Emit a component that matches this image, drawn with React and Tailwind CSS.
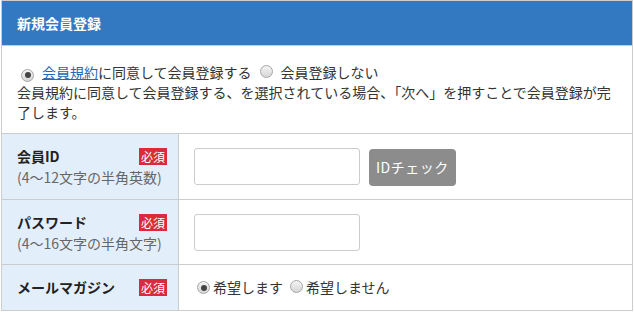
import React from "react";

const font = { fontFamily: '"Noto Sans CJK JP", "Noto Sans", sans-serif' };

function Radio({ checked }) {
  return (
    <span className="inline-flex items-center justify-center w-[13px] h-[13px] rounded-full border border-[#a6a6a6] bg-gradient-to-b from-[#f4f4f4] to-[#d6d6d6] shrink-0">
      {checked && <span className="w-[6px] h-[6px] rounded-full bg-[#444]" />}
    </span>
  );
}

function Badge() {
  return (
    <span className="bg-[#dc2a3c] text-white text-[12px] leading-[17px] px-[2px] h-[17px]">必須</span>
  );
}

function Row({ label, note, children, height }) {
  return (
    <div className={`flex border-t border-[#cccccc] ${height}`}>
      <div className="w-[177px] shrink-0 bg-[#e3eefb] border-r border-[#cccccc] pl-[15px] pr-[11px] flex flex-col justify-center">
        <div className="flex items-center justify-between">
          <span className="font-bold text-[14px] text-[#222]">{label}</span>
          <Badge />
        </div>
        {note && <div className="text-[14px] text-[#666] leading-[20px]">{note}</div>}
      </div>
      <div className="flex-1 pl-[15px] flex items-center gap-[9px]">{children}</div>
    </div>
  );
}

export default function App() {
  return (
    <div className="bg-white w-[634px] h-[312px]" style={font}>
      <div className="ml-px w-[632px] border border-[#cccccc]">
        {/* header */}
        <div className="bg-[#3379c2] h-[45px] flex items-center pl-[15px] border-b border-[#cccccc]">
          <span className="text-white font-bold text-[14px]">新規会員登録</span>
        </div>

        {/* agreement */}
        <div className="pl-[15px] pr-[12px] pt-[15px] pb-[11px] text-[14px] text-[#333]">
          <div className="flex items-center h-[22px] leading-[22px]">
            <span className="ml-[4px] mr-[8px]"><Radio checked /></span>
            <span className="text-[#2567b8] underline">会員規約</span>
            <span>に同意して会員登録する</span>
            <span className="ml-[8px] mr-[8px]"><Radio /></span>
            <span>会員登録しない</span>
          </div>
          <p className="leading-[20px] mt-[-1px]">
            会員規約に同意して会員登録する、を選択されている場合、「次へ」を押すことで会員登録が完了します。
          </p>
        </div>

        {/* rows */}
        <Row label="会員ID" note="(4〜12文字の半角英数)" height="h-[66px]">
          <input className="w-[166px] h-[37px] border border-[#cccccc] rounded-[3px] outline-none" />
          <button className="h-[37px] px-[7px] bg-[#8c8c8c] text-white text-[14px] tracking-[0.5px] rounded-[4px] mt-[2px]">
            IDチェック
          </button>
        </Row>
        <Row label="パスワード" note="(4〜16文字の半角文字)" height="h-[65px]">
          <input type="password" className="w-[166px] h-[37px] border border-[#cccccc] rounded-[3px] outline-none" />
        </Row>
        <Row label="メールマガジン" height="h-[46px]">
          <div className="flex items-center text-[14px] text-[#333] ml-[3px]">
            <Radio checked />
            <span className="ml-[3px]">希望します</span>
            <span className="ml-[7px]"><Radio /></span>
            <span className="ml-[3px]">希望しません</span>
          </div>
        </Row>
      </div>
    </div>
  );
}
